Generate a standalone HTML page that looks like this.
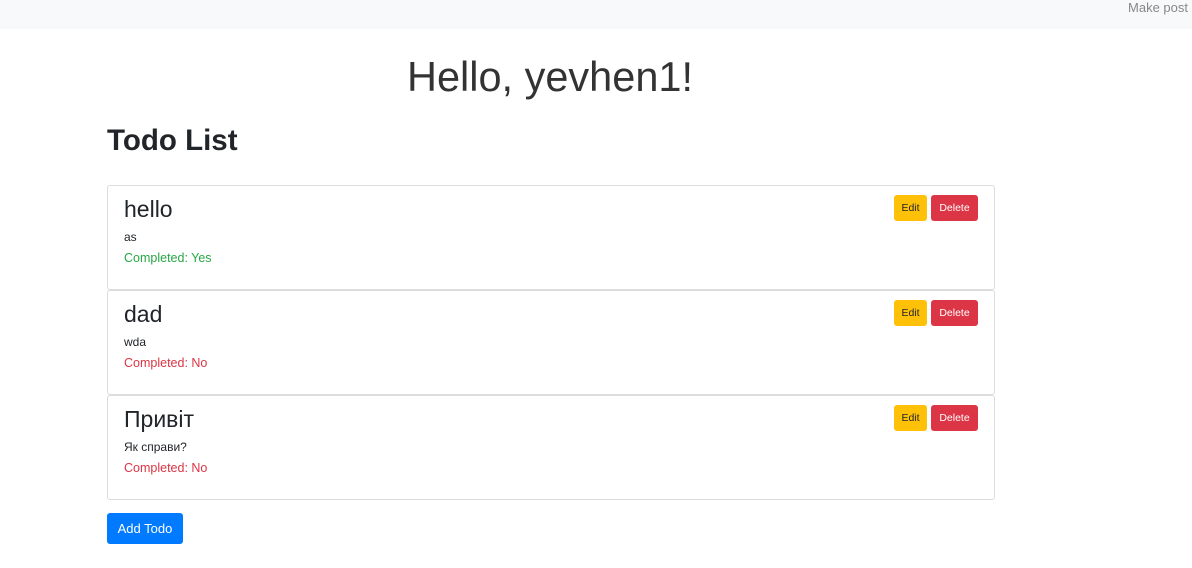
<!DOCTYPE html>
<html><head><meta charset="utf-8"><style>
*{box-sizing:border-box;margin:0;padding:0}
body{width:1192px;height:568px;background:#fff;font-family:"Liberation Sans","Noto Sans CJK SC",sans-serif;color:#212529;position:relative;overflow:hidden}
.nav{position:absolute;left:0;top:0;width:1192px;height:29px;background:#f8f9fa}
.nav span{position:absolute;right:4px;top:0px;font-size:13px;color:#888}
.hello{position:absolute;left:0;width:1100px;text-align:center;top:53px;font-size:41.5px;font-weight:300;color:#333}
.h2{position:absolute;left:107px;top:124px;font-size:29.5px;font-weight:bold}
.card{position:absolute;left:107px;width:888px;height:105px;border:1px solid #dcdcdc;border-radius:3px}
.card h5{position:absolute;left:16px;top:10px;font-size:23px;font-weight:500}
.card .d{position:absolute;left:16px;top:44px;font-size:12px}
.card .c{position:absolute;left:16px;top:65px;font-size:12.5px}
.btn{position:absolute;top:9px;height:26px;font-size:10.5px;line-height:26px;text-align:center;border-radius:3px}
.e{left:786px;width:33px;background:#ffc107;color:#212529}
.x{left:823px;width:47px;background:#dc3545;color:#fff}
.add{position:absolute;left:107px;top:513px;width:76px;height:31px;background:#007bff;color:#fff;font-size:13px;line-height:31px;text-align:center;border-radius:3px}
</style></head><body>
<div class="nav"><span>Make post</span></div>
<div class="hello">Hello, yevhen1!</div>
<div class="h2">Todo List</div>
<div class="card" style="top:185px"><h5>hello</h5><div class="d">as</div><div class="c" style="color:#28a745">Completed: Yes</div><div class="btn e">Edit</div><div class="btn x">Delete</div></div>
<div class="card" style="top:290px"><h5>dad</h5><div class="d">wda</div><div class="c" style="color:#dc3545">Completed: No</div><div class="btn e">Edit</div><div class="btn x">Delete</div></div>
<div class="card" style="top:395px"><h5>Привіт</h5><div class="d">Як справи?</div><div class="c" style="color:#dc3545">Completed: No</div><div class="btn e">Edit</div><div class="btn x">Delete</div></div>
<div class="add">Add Todo</div>
</body></html>
